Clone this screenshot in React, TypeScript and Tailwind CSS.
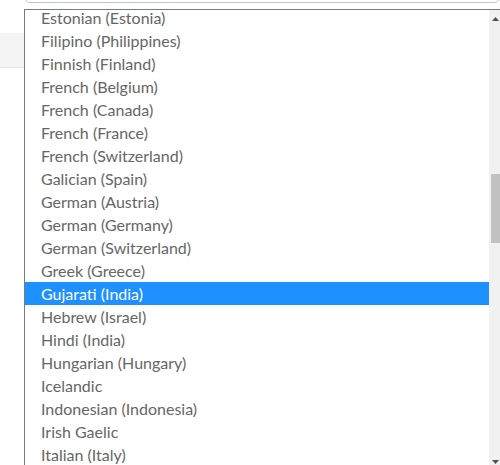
const languages = [
  "Estonian (Estonia)",
  "Filipino (Philippines)",
  "Finnish (Finland)",
  "French (Belgium)",
  "French (Canada)",
  "French (France)",
  "French (Switzerland)",
  "Galician (Spain)",
  "German (Austria)",
  "German (Germany)",
  "German (Switzerland)",
  "Greek (Greece)",
  "Gujarati (India)",
  "Hebrew (Israel)",
  "Hindi (India)",
  "Hungarian (Hungary)",
  "Icelandic",
  "Indonesian (Indonesia)",
  "Irish Gaelic",
  "Italian (Italy)",
  "Italian (Switzerland)",
];

const selected = "Gujarati (India)";

export default function App() {
  return (
    <div className="relative w-[500px] h-[465px] overflow-hidden bg-white" style={{ fontFamily: "Lato, 'Noto Sans', sans-serif" }}>
      {/* page behind the open select */}
      <div className="ml-[24px] -mt-[37px] h-[40px] rounded-md border border-[#bcc5dc] bg-white"></div>
      <div className="mt-[30px] h-[35px] bg-[#f4f4f4] border-b border-[#e6e6e6]"></div>

      {/* open dropdown */}
      <div className="absolute left-[24px] top-[9px] w-[478px] h-[460px] flex border border-[#7a7a7a] bg-white">
        <div className="flex-1 overflow-hidden">
          <ul className="-mt-[4px]">
            {languages.map((lang) => (
              <li
                key={lang}
                className={`h-[23px] pl-[16px] flex items-center text-[16px] leading-none ${
                  lang === selected ? "bg-[#1e90ff] text-white" : "text-[#666666]"
                }`}
              >
                {lang}
              </li>
            ))}
          </ul>
        </div>
        <div className="w-[11px] mr-[1px] bg-[#f1f1f1] flex flex-col items-center">
          <svg width="7" height="4" viewBox="0 0 7 4" className="mt-[7px] ml-[1px]">
            <polygon points="3.5,0 7,4 0,4" fill="#505050" />
          </svg>
          <div className="mt-[153px] ml-[2px] w-[9px] h-[69px] bg-[#c1c1c1]"></div>
          <div className="flex-1"></div>
          <svg width="7" height="4" viewBox="0 0 7 4" className="mb-[4px] ml-[1px]">
            <polygon points="0,0 7,0 3.5,4" fill="#505050" />
          </svg>
        </div>
      </div>
    </div>
  );
}
